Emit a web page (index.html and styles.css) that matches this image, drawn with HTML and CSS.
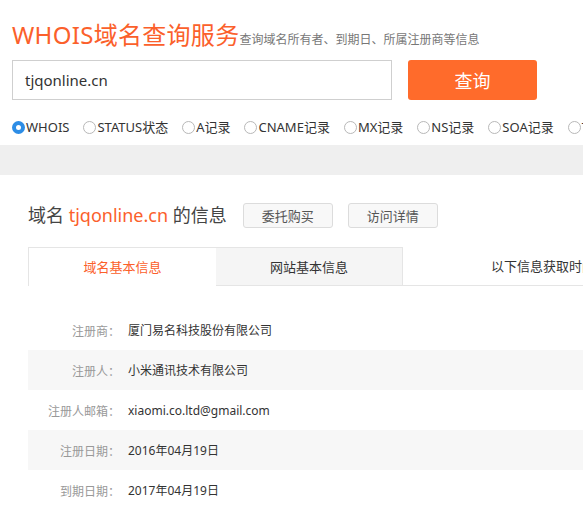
FILE: index.html
```html
<!DOCTYPE html>
<html lang="zh-CN">
<head>
<meta charset="utf-8">
<title>WHOIS域名查询服务</title>
<link rel="stylesheet" href="styles.css">
</head>
<body>
<div class="page">
  <header class="header">
    <div class="title-row">
      <h1 class="title">WHOIS域名查询服务</h1>
      <span class="subtitle">查询域名所有者、到期日、所属注册商等信息</span>
    </div>
    <div class="search-row">
      <div class="search-input">tjqonline.cn</div>
      <button class="search-btn">查询</button>
    </div>
    <div class="radio-row">
      <label class="radio-item"><span class="radio checked"></span>WHOIS</label>
      <label class="radio-item"><span class="radio"></span>STATUS状态</label>
      <label class="radio-item"><span class="radio"></span>A记录</label>
      <label class="radio-item"><span class="radio"></span>CNAME记录</label>
      <label class="radio-item"><span class="radio"></span>MX记录</label>
      <label class="radio-item"><span class="radio"></span>NS记录</label>
      <label class="radio-item"><span class="radio"></span>SOA记录</label>
      <label class="radio-item"><span class="radio"></span>TXT记录</label>
    </div>
  </header>
  <div class="band"></div>
  <section class="info">
    <div class="info-head">
      <h2 class="info-title">域名 <span class="domain">tjqonline.cn</span> 的信息</h2>
      <button class="ghost-btn">委托购买</button>
      <button class="ghost-btn">访问详情</button>
    </div>
    <div class="tabs">
      <div class="tab active">域名基本信息</div>
      <div class="tab">网站基本信息</div>
      <div class="tab-rest">以下信息获取时间：2016-11-24 10:38:43</div>
    </div>
    <div class="rows">
      <div class="row"><span class="label">注册商：</span><span class="value">厦门易名科技股份有限公司</span></div>
      <div class="row alt"><span class="label">注册人：</span><span class="value">小米通讯技术有限公司</span></div>
      <div class="row"><span class="label">注册人邮箱：</span><span class="value">xiaomi.co.ltd@gmail.com</span></div>
      <div class="row alt"><span class="label">注册日期：</span><span class="value">2016年04月19日</span></div>
      <div class="row"><span class="label">到期日期：</span><span class="value">2017年04月19日</span></div>
    </div>
  </section>
</div>
</body>
</html>
```

FILE: styles.css
```css
html, body {
  margin: 0;
  padding: 0;
  overflow: hidden;
  background: #fff;
}
body {
  font-family: "Noto Sans", "Noto Sans CJK SC", sans-serif;
  color: #333;
}
.page {
  width: 583px;
  overflow: hidden;
}
.header {
  padding: 20px 0 0 12px;
}
.title-row {
  display: flex;
  align-items: baseline;
  white-space: nowrap;
  height: 30px;
}
.title {
  margin: 0;
  font-size: 24px;
  font-weight: normal;
  line-height: 30px;
  color: #fb602b;
  letter-spacing: 0.3px;
}
.subtitle {
  font-size: 12px;
  color: #777;
  line-height: 16px;
}
.search-row {
  display: flex;
  gap: 16px;
  margin-top: 10px;
}
.search-input {
  box-sizing: border-box;
  width: 380px;
  height: 40px;
  border: 1px solid #cfcfcf;
  padding: 0 12px;
  font-size: 15px;
  line-height: 38px;
  color: #333;
}
.search-btn {
  width: 129px;
  height: 40px;
  border: 0;
  border-radius: 3px;
  background: #ff6b2b;
  color: #fff;
  font-family: "Noto Sans CJK SC", sans-serif;
  font-size: 18px;
  padding: 0;
}
.radio-row {
  display: flex;
  align-items: center;
  margin-top: 18px;
  height: 18px;
  white-space: nowrap;
  font-size: 13px;
  color: #333;
  overflow: hidden;
}
.radio-item {
  display: flex;
  align-items: center;
  margin-right: 14px;
  line-height: 18px;
  flex: none;
}
.radio {
  box-sizing: border-box;
  width: 13px;
  height: 13px;
  border-radius: 50%;
  border: 1px solid #b8b8b8;
  background: #fff;
  margin-right: 1px;
  flex: none;
}
.radio.checked {
  border: 4px solid #2d8de6;
  background: #fff;
}
.band {
  height: 30px;
  background: #efefef;
  margin-top: 9px;
}
.info {
  padding: 0 0 0 28px;
}
.info-head {
  display: flex;
  align-items: center;
  height: 26px;
  margin-top: 27px;
  white-space: nowrap;
}
.info-title {
  margin: 0 16px 0 0;
  font-size: 18px;
  font-weight: normal;
  color: #444;
  line-height: 26px;
}
.domain {
  color: #fb602b;
}
.ghost-btn {
  box-sizing: border-box;
  width: 90px;
  height: 25px;
  border: 1px solid #dcdcdc;
  border-radius: 3px;
  background: #f8f8f8;
  color: #555;
  font-family: "Noto Sans CJK SC", sans-serif;
  font-size: 13px;
  padding: 0;
  margin-right: 15px;
  flex: none;
}
.tabs {
  display: flex;
  margin-top: 19px;
  height: 39px;
  white-space: nowrap;
}
.tab {
  box-sizing: border-box;
  flex: none;
  width: 187px;
  height: 39px;
  border: 1px solid #e5e5e5;
  border-left: 0;
  background: #f5f5f5;
  text-align: center;
  font-size: 13px;
  line-height: 38px;
  color: #333;
}
.tab.active {
  width: 188px;
  border-left: 1px solid #e5e5e5;
  border-bottom: 0;
  border-right: 0;
  background: #fff;
  color: #fb602b;
}
.tab-rest {
  flex: 1;
  min-width: 0;
  overflow: hidden;
  border-bottom: 1px solid #e5e5e5;
  padding-left: 88px;
  font-size: 13px;
  line-height: 38px;
  color: #333;
}
.rows {
  margin-top: 24px;
}
.row {
  display: flex;
  align-items: center;
  height: 40px;
  font-size: 12px;
  white-space: nowrap;
}
.row.alt {
  background: #f7f7f7;
}
.label {
  width: 92px;
  text-align: right;
  color: #999;
  font-family: "Noto Sans CJK SC", sans-serif;
}
.value {
  padding-left: 8px;
  color: #333;
}
```
